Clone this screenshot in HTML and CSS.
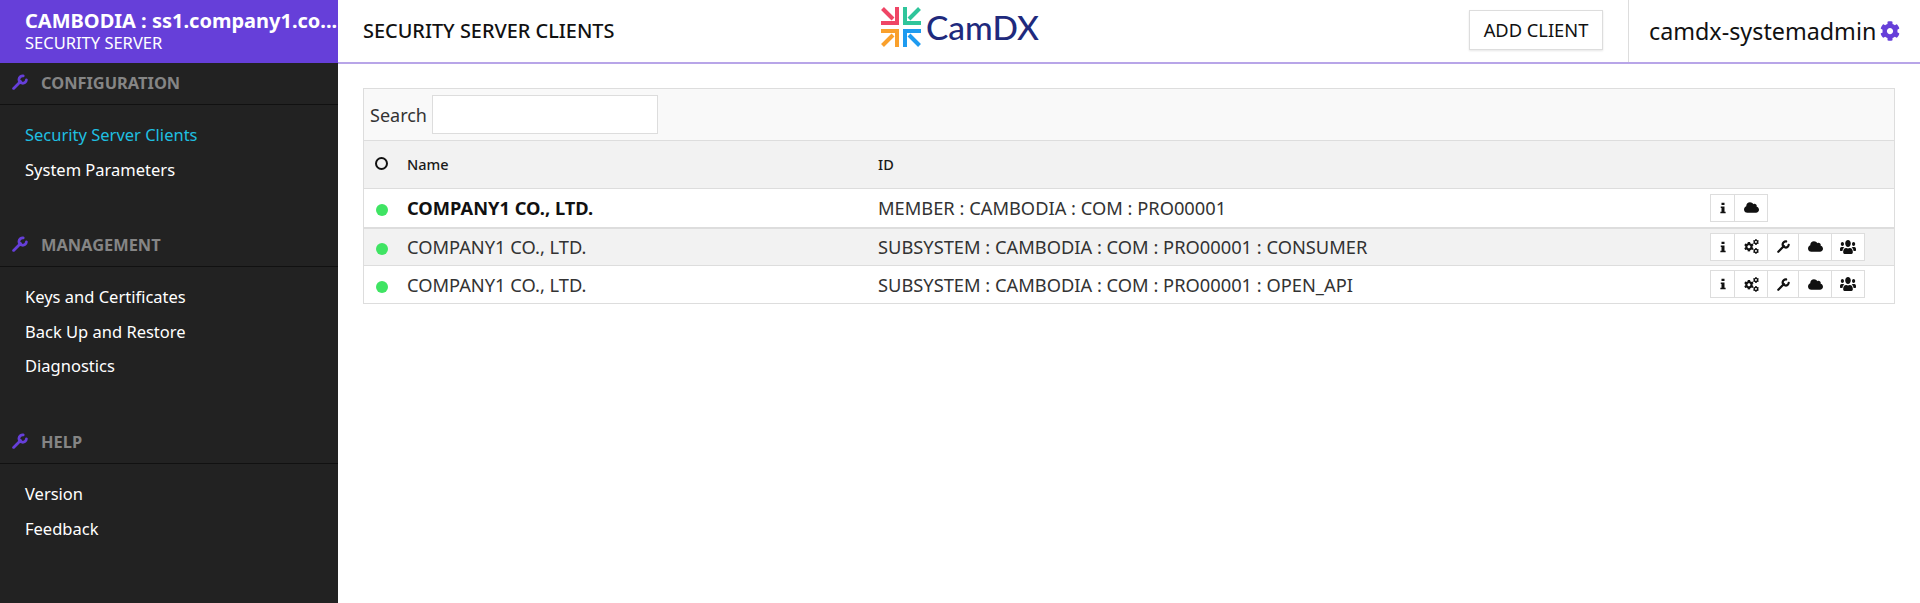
FILE: index.html
```html
<!DOCTYPE html>
<html lang="en">
<head>
    <meta charset="UTF-8">
    <title>Security Server Clients</title>
    <link rel="stylesheet" href="styles.css">
</head>
<body>
    <svg class="defs" width="0" height="0">
        <symbol id="i-wrench" viewBox="0.500 0.500 15 15"><path d="M2 14L8.500 7.500M11 2.200A3.500 3.500 0 1 0 14 6" fill="none" stroke="currentColor" stroke-width="2.600" stroke-linecap="round"/></symbol>
        <symbol id="i-gear" viewBox="0 0 512 512"><path d="M487.4 315.7l-42.6-24.6c4.3-23.2 4.3-47 0-70.2l42.6-24.6c4.9-2.8 7.1-8.6 5.5-14-11.1-35.6-30-67.8-54.7-94.6-3.8-4.1-10-5.1-14.8-2.3L380.8 110c-17.9-15.4-38.5-27.3-60.8-35.1V25.8c0-5.6-3.9-10.5-9.4-11.7-36.7-8.2-74.3-7.8-109.2 0-5.5 1.2-9.4 6.1-9.4 11.7V75c-22.2 7.9-42.8 19.8-60.8 35.1L88.7 85.5c-4.9-2.8-11-1.9-14.8 2.3-24.7 26.7-43.6 58.9-54.7 94.6-1.7 5.4.6 11.2 5.5 14L67.3 221c-4.3 23.2-4.3 47 0 70.2l-42.6 24.6c-4.9 2.8-7.1 8.6-5.5 14 11.1 35.6 30 67.8 54.7 94.6 3.8 4.1 10 5.1 14.8 2.3l42.6-24.6c17.9 15.4 38.5 27.3 60.8 35.1v49.2c0 5.6 3.9 10.5 9.4 11.7 36.7 8.2 74.3 7.8 109.2 0 5.5-1.2 9.4-6.1 9.4-11.7v-49.2c22.2-7.9 42.8-19.8 60.8-35.1l42.6 24.6c4.9 2.8 11 1.9 14.8-2.3 24.7-26.7 43.6-58.9 54.7-94.6 1.5-5.5-.7-11.3-5.6-14.1zM256 336c-44.1 0-80-35.9-80-80s35.9-80 80-80 80 35.9 80 80-35.9 80-80 80z"/></symbol>
        <symbol id="i-cogs" viewBox="0 0 16 16">
            <use href="#i-gear" x="0" y="3" width="10.500" height="10.500"/>
            <use href="#i-gear" x="9.500" y="0" width="6.500" height="6.500"/>
            <use href="#i-gear" x="9.500" y="9.500" width="6.500" height="6.500"/>
        </symbol>
        <symbol id="i-cloud" viewBox="0 0 640 512"><path d="M537.6 226.6c4.1-10.7 6.4-22.4 6.4-34.6 0-53-43-96-96-96-19.7 0-38.1 6-53.3 16.2C367 64.2 315.3 32 256 32c-88.4 0-160 71.6-160 160 0 2.7.1 5.4.2 8.1C40.2 219.8 0 273.2 0 336c0 79.5 64.5 144 144 144h368c70.7 0 128-57.3 128-128 0-61.9-44-113.6-102.4-125.4z"/></symbol>
        <symbol id="i-users" viewBox="0 30 640 452" preserveAspectRatio="none"><path d="M96 224c35.3 0 64-28.7 64-64s-28.7-64-64-64-64 28.7-64 64 28.7 64 64 64zm448 0c35.3 0 64-28.7 64-64s-28.7-64-64-64-64 28.7-64 64 28.7 64 64 64zm32 32h-64c-17.6 0-33.5 7.1-45.1 18.6 40.3 22.1 68.9 62 75.1 109.4h66c17.7 0 32-14.3 32-32v-32c0-35.3-28.7-64-64-64zm-256 0c61.9 0 112-50.1 112-112S381.9 32 320 32 208 82.1 208 144s50.1 112 112 112zm76.8 32h-8.3c-20.8 10-43.9 16-68.5 16s-47.6-6-68.5-16h-8.3C179.6 288 128 339.6 128 403.2V432c0 26.5 21.5 48 48 48h288c26.5 0 48-21.5 48-48v-28.8c0-63.6-51.6-115.2-115.2-115.2zm-223.7-13.4C161.5 263.1 145.6 256 128 256H64c-35.3 0-64 28.7-64 64v32c0 17.7 14.3 32 32 32h65.9c6.3-47.4 34.9-87.3 75.2-109.4z"/></symbol>
        <symbol id="i-info" viewBox="0 0 12 16"><path d="M4 1h4v3H4zM3 6h5v7h1.500v2h-7v-2H4V8H3z"/></symbol>
    </svg>

    <div class="sidebar">
        <div class="brand">
            <div class="brand-name">CAMBODIA : ss1.company1.co...</div>
            <div class="brand-sub">SECURITY SERVER</div>
        </div>

        <div class="nav-head"><svg class="nav-icon"><use href="#i-wrench"/></svg>CONFIGURATION</div>
        <ul class="nav-list list-short">
            <li class="active">Security Server Clients</li>
            <li>System Parameters</li>
        </ul>

        <div class="nav-head"><svg class="nav-icon"><use href="#i-wrench"/></svg>MANAGEMENT</div>
        <ul class="nav-list list-long">
            <li>Keys and Certificates</li>
            <li>Back Up and Restore</li>
            <li>Diagnostics</li>
        </ul>

        <div class="nav-head"><svg class="nav-icon"><use href="#i-wrench"/></svg>HELP</div>
        <ul class="nav-list">
            <li>Version</li>
            <li>Feedback</li>
        </ul>
    </div>

    <div class="main">
        <div class="topbar">
            <div class="page-title">SECURITY SERVER CLIENTS</div>
            <div class="logo">
                <svg class="logo-mark" viewBox="0 0 40 40" fill="none" stroke-width="4">
                    <g stroke="#ef4565"><path d="M0 16H16V0"/><path d="M1.500 1.500L12 12"/></g>
                    <g stroke="#2fc59b"><path d="M40 16H24V0"/><path d="M38.500 1.500L28 12"/></g>
                    <g stroke="#f9a02c"><path d="M0 24H16V40"/><path d="M1.500 38.500L12 28"/></g>
                    <g stroke="#1e9bf0"><path d="M40 24H24V40"/><path d="M38.500 38.500L28 28"/></g>
                </svg>
                <span class="logo-text">CamDX</span>
            </div>
            <button class="add-btn" type="button">ADD CLIENT</button>
            <div class="user">
                camdx-systemadmin
                <svg class="user-gear"><use href="#i-gear"/></svg>
            </div>
        </div>

        <div class="content">
            <div class="grid">
                <div class="search-row">
                    <label for="search">Search</label>
                    <input id="search" type="text">
                </div>
                <table>
                    <thead>
                        <tr>
                            <th class="col-status"><span class="ring"></span></th>
                            <th class="col-name">Name</th>
                            <th class="col-id">ID</th>
                            <th></th>
                        </tr>
                    </thead>
                    <tbody>
                        <tr class="owner">
                            <td><span class="dot"></span></td>
                            <td class="strong">COMPANY1 CO., LTD.</td>
                            <td>MEMBER : CAMBODIA : COM : PRO00001</td>
                            <td>
                                <div class="actions">
                                    <span class="act a-info"><svg class="info"><use href="#i-info"/></svg></span>
                                    <span class="act a-cogs"><svg><use href="#i-cloud"/></svg></span>
                                </div>
                            </td>
                        </tr>
                        <tr class="alt">
                            <td><span class="dot"></span></td>
                            <td>COMPANY1 CO., LTD.</td>
                            <td>SUBSYSTEM : CAMBODIA : COM : PRO00001 : CONSUMER</td>
                            <td>
                                <div class="actions">
                                    <span class="act a-info"><svg class="info"><use href="#i-info"/></svg></span>
                                    <span class="act a-cogs"><svg><use href="#i-cogs"/></svg></span>
                                    <span class="act a-wrench"><svg class="thin"><use href="#i-wrench"/></svg></span>
                                    <span class="act a-cloud"><svg><use href="#i-cloud"/></svg></span>
                                    <span class="act a-users"><svg class="people"><use href="#i-users"/></svg></span>
                                </div>
                            </td>
                        </tr>
                        <tr class="last">
                            <td><span class="dot"></span></td>
                            <td>COMPANY1 CO., LTD.</td>
                            <td>SUBSYSTEM : CAMBODIA : COM : PRO00001 : OPEN_API</td>
                            <td>
                                <div class="actions">
                                    <span class="act a-info"><svg class="info"><use href="#i-info"/></svg></span>
                                    <span class="act a-cogs"><svg><use href="#i-cogs"/></svg></span>
                                    <span class="act a-wrench"><svg class="thin"><use href="#i-wrench"/></svg></span>
                                    <span class="act a-cloud"><svg><use href="#i-cloud"/></svg></span>
                                    <span class="act a-users"><svg class="people"><use href="#i-users"/></svg></span>
                                </div>
                            </td>
                        </tr>
                    </tbody>
                </table>
            </div>
        </div>
    </div>
</body>
</html>
```

FILE: styles.css
```css
* {
    box-sizing: border-box;
}

body {
    margin: 0;
    height: 603px;
    overflow: hidden;
    display: flex;
    font-family: "Noto Sans", sans-serif;
    color: #1a1a1a;
    background-color: white;
}

.defs {
    position: absolute;
}

/* sidebar */
.sidebar {
    width: 338px;
    flex-shrink: 0;
    background-color: #222222;
    color: white;
}

.brand {
    height: 63px;
    padding: 8px 0 0 25px;
    background-color: #663fd9;
}

.brand-name {
    font-size: 20px;
    font-weight: 700;
    line-height: 25px;
    white-space: nowrap;
}

.brand-sub {
    font-size: 16.500px;
    line-height: 20px;
}

.nav-head {
    height: 42px;
    padding: 0 0 3px 12px;
    display: flex;
    align-items: center;
    font-size: 16.400px;
    font-weight: 700;
    color: #858585;
    border-bottom: 1px solid #111111;
}

.nav-icon {
    width: 16px;
    height: 16px;
    margin-right: 13px;
    color: #663fd9;
}

.nav-list {
    list-style: none;
    margin: 0;
    padding: 13px 0 0 25px;
    font-size: 16.500px;
    line-height: 34.500px;
}

.list-short {
    height: 120px;
}

.list-long {
    height: 155px;
}

.nav-list .active {
    color: #1fbfe0;
}

/* top bar */
.main {
    flex: 1;
    min-width: 0;
}

.topbar {
    height: 64px;
    display: flex;
    align-items: center;
    padding-left: 25px;
    border-bottom: 2px solid #b8a5e8;
}

.page-title {
    width: 518px;
    margin-top: -2px;
    font-size: 19.900px;
    font-weight: 500;
    color: #111111;
}

.logo {
    width: 588px;
    display: flex;
    align-items: center;
    height: 40px;
    margin-top: -8px;
}

.logo-mark {
    width: 40px;
    height: 40px;
    margin-right: 5px;
}

.logo-text {
    font-family: "Lato", sans-serif;
    font-size: 33.500px;
    font-weight: 500;
    color: #1f2a7d;
}

.add-btn {
    width: 134px;
    height: 40px;
    margin-top: -2px;
    padding: 0 0 2px;
    font-family: inherit;
    font-size: 18.300px;
    color: #111111;
    background-color: white;
    border: 1px solid #dddddd;
    box-shadow: 0 1px 2px rgba(0, 0, 0, 0.1);
}

.user {
    height: 62px;
    margin-left: 25px;
    padding-left: 20px;
    display: flex;
    align-items: center;
    gap: 4px;
    font-size: 23.300px;
    color: #111111;
    border-left: 1px solid #dddddd;
    white-space: nowrap;
}

.user-gear {
    width: 20px;
    height: 20px;
    fill: #663fd9;
}

/* table */
.content {
    padding: 24px 25px 0;
}

.grid {
    border: 1px solid #dddddd;
    border-bottom: none;
}

.search-row {
    height: 52px;
    display: flex;
    align-items: center;
    gap: 5px;
    padding-left: 6px;
    font-size: 18px;
    color: #333333;
    background-color: #f9f9f9;
    border-bottom: 1px solid #dddddd;
}

.search-row input {
    width: 226px;
    height: 39px;
    border: 1px solid #dddddd;
    background-color: white;
}

table {
    width: 100%;
    border-collapse: separate;
    border-spacing: 0;
    table-layout: fixed;
}

th {
    height: 48px;
    padding: 0 0 2px;
    text-align: left;
    font-size: 14.500px;
    font-weight: 500;
    background-color: #f2f2f2;
    border-bottom: 1px solid #dddddd;
}

td {
    height: 37px;
    padding: 0 0 1px;
    font-size: 18.300px;
    color: #333333;
    border-bottom: 1px solid #dddddd;
}

.last td {
    height: 38px;
}

.col-status {
    width: 43px;
}

.col-status,
td:first-child {
    padding-left: 12px;
}

.col-name {
    width: 471px;
}

.col-id {
    width: 832px;
}

.ring {
    display: block;
    width: 13px;
    height: 13px;
    margin-left: -1px;
    border: 2px solid #111111;
    border-radius: 50%;
}

.dot {
    display: block;
    width: 12px;
    height: 12px;
    margin-top: 5px;
    border-radius: 50%;
    background-color: #3fe463;
}

.owner td {
    height: 40px;
    border-bottom-width: 2px;
}

.owner td.strong {
    font-weight: 700;
    color: #111111;
}

.alt td {
    background-color: #f2f2f2;
}

.actions {
    display: flex;
}

.act {
    height: 28px;
    display: flex;
    align-items: center;
    justify-content: center;
    background-color: white;
    border: 1px solid #dddddd;
    margin-left: -1px;
}

.act svg {
    width: 15px;
    height: 15px;
    fill: #111111;
    color: #111111;
}

.act svg.info {
    width: 10px;
    height: 12px;
}

.act svg.thin {
    width: 13px;
    height: 13px;
}

.act svg.people {
    width: 16px;
    height: 14px;
}

.a-info {
    width: 25px;
    margin-left: 0;
}

.a-cogs {
    width: 34px;
}

.a-wrench {
    width: 32px;
}

.a-cloud {
    width: 34px;
}

.a-users {
    width: 34px;
}
```
